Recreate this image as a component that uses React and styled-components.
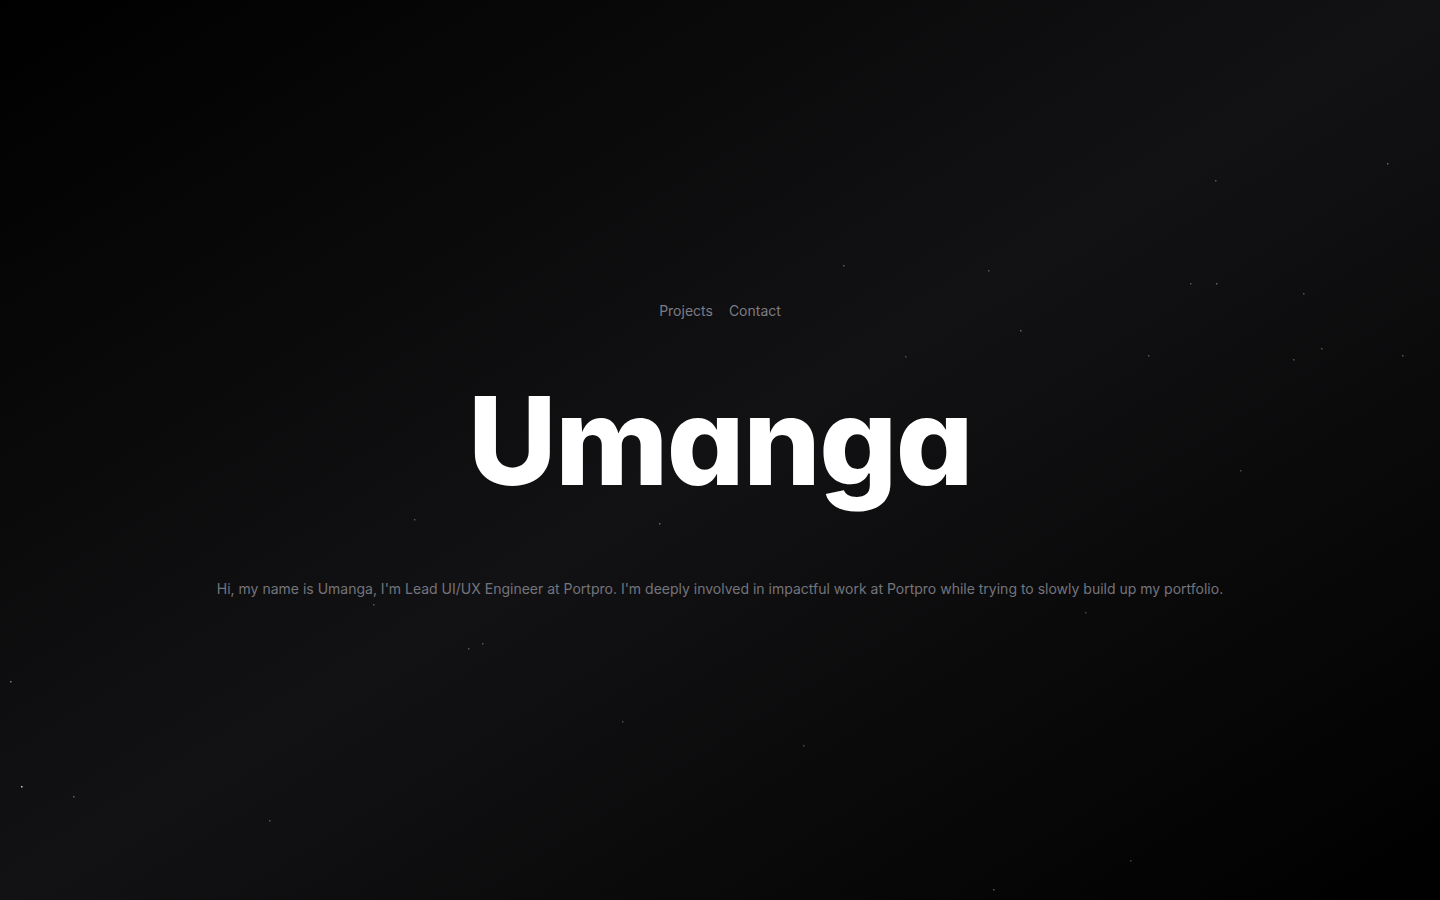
import React from 'react';
import styled, { createGlobalStyle } from 'styled-components';

const GlobalStyle = createGlobalStyle`
  html, body {
    margin: 0;
    padding: 0;
    background: #000;
  }
  * {
    box-sizing: border-box;
  }
`;

const particles = [
  [10, 681, 0.45], [21, 786, 0.8], [73, 796, 0.35], [1387, 163, 0.35],
  [1215, 180, 0.3], [843, 265, 0.3], [988, 270, 0.3], [1190, 283, 0.3],
  [1216, 283, 0.35], [1303, 293, 0.3], [1020, 330, 0.35], [1148, 355, 0.3],
  [1402, 355, 0.3], [1293, 359, 0.3], [1321, 348, 0.3], [659, 523, 0.35],
  [414, 519, 0.3], [468, 648, 0.3], [482, 643, 0.3], [622, 721, 0.25],
  [269, 820, 0.3], [993, 889, 0.35], [1130, 860, 0.25], [373, 604, 0.3],
  [905, 356, 0.25], [1085, 612, 0.25], [803, 745, 0.25], [1240, 470, 0.25],
];

const App = () => {
  return (
    <>
      <GlobalStyle />
      <Screen>
        <Dust width="1440" height="900" viewBox="0 0 1440 900">
          {particles.map(([x, y, o], i) => (
            <rect key={i} x={x} y={y} width="1.5" height="1.5" fill="#fff" opacity={o} />
          ))}
        </Dust>
        <Nav>
          <NavList>
            {['Projects', 'Contact'].map((item) => (
              <NavLink key={item} href="#">{item}</NavLink>
            ))}
          </NavList>
        </Nav>
        <Title>Umanga</Title>
        <Intro>
          Hi, my name is Umanga, I'm Lead UI/UX Engineer at Portpro. I'm deeply involved in impactful
          work at Portpro while trying to slowly build up my portfolio.
        </Intro>
      </Screen>
    </>
  );
};

const Screen = styled.main`
  position: relative;
  width: 100vw;
  height: 100vh;
  overflow: hidden;
  display: flex;
  flex-direction: column;
  align-items: center;
  justify-content: center;
  background: linear-gradient(to top left, #000 0%, rgb(18, 18, 20) 50%, #000 100%);
  font-family: Inter, 'Liberation Sans', sans-serif;
`;

const Dust = styled.svg`
  position: absolute;
  inset: 0;
  pointer-events: none;
`;

const Nav = styled.nav`
  position: relative;
  margin-bottom: 59px;
`;

const NavList = styled.ul`
  display: flex;
  align-items: center;
  justify-content: center;
  gap: 16px;
  list-style: none;
  margin: 0;
  padding: 0;
`;

const NavLink = styled.a`
  font-size: 14px;
  line-height: 20px;
  color: #7c7c84;
  text-decoration: none;
`;

const Title = styled.h1`
  position: relative;
  margin: 0 0 77px;
  font-size: 122px;
  line-height: 1;
  font-weight: 800;
  letter-spacing: -1.5px;
  color: #fff;
  white-space: nowrap;
  font-feature-settings: 'cv11' 1;
`;

const Intro = styled.h2`
  position: relative;
  margin: 0;
  font-size: 14px;
  line-height: 20px;
  font-weight: 400;
  color: #74747c;
  text-align: center;
`;

export default App;
